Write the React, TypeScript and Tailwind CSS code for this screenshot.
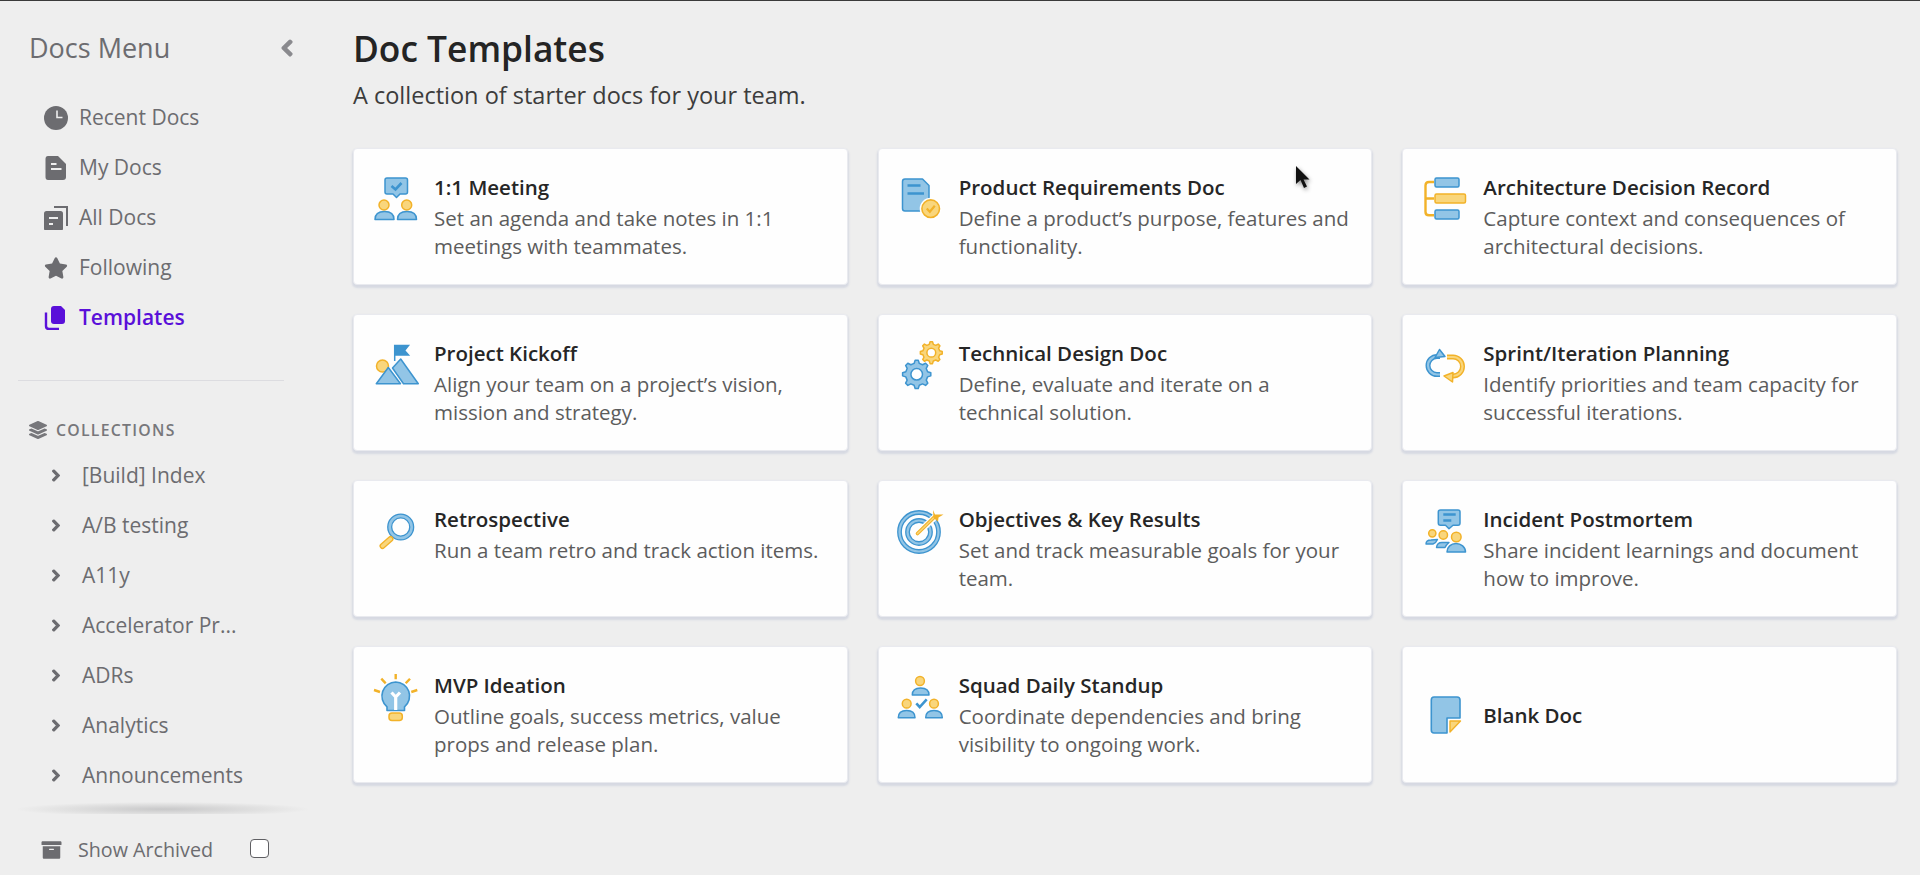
import React from "react";
import { FaChevronLeft, FaChevronRight, FaLayerGroup, FaArchive, FaStar } from "react-icons/fa";

const B = "#3d94cf";
const BL = "#92c5e6";
const Y = "#f2b229";
const YL = "#f9d67c";

function gearPath(cx: number, cy: number, ro: number, ri: number, teeth: number) {
  const pts: string[] = [];
  const step = (Math.PI * 2) / teeth;
  for (let i = 0; i < teeth; i++) {
    const a = i * step - Math.PI / 2;
    const w = step * 0.2;
    const seq: [number, number][] = [
      [a - w * 0.7, ro],
      [a + w * 0.7, ro],
      [a + w * 1.5, ri],
      [a + step - w * 1.5, ri],
    ];
    seq.forEach(([t, r]) => pts.push(`${(cx + r * Math.cos(t)).toFixed(2)} ${(cy + r * Math.sin(t)).toFixed(2)}`));
  }
  return "M" + pts.join("L") + "Z";
}

const Person = ({ hx, hy, r, x1, x2, y1, y2 }: { hx: number; hy: number; r: number; x1: number; x2: number; y1: number; y2: number }) => (
  <>
    <circle cx={hx} cy={hy} r={r} fill={YL} stroke={Y} strokeWidth="1.5" />
    <path d={`M${x1} ${y2}C${x1} ${y1 + 1} ${(x1 + x2) / 2 - 4} ${y1} ${(x1 + x2) / 2} ${y1}C${(x1 + x2) / 2 + 4} ${y1} ${x2} ${y1 + 1} ${x2} ${y2}Z`} fill={BL} stroke={B} strokeWidth="1.5" strokeLinejoin="round" />
  </>
);

const Svg = ({ children }: { children: React.ReactNode }) => (
  <svg viewBox="0 0 48 48" width="48" height="48" className="shrink-0 overflow-visible">{children}</svg>
);

const icons: Record<string, React.ReactNode> = {
  meeting: (
    <Svg>
      <path d="M16 3H34.5Q36.5 3 36.5 5V17Q36.5 19 34.5 19H29L25.5 22.5L22 19H16Q14 19 14 17V5Q14 3 16 3Z" fill={BL} stroke={B} strokeWidth="1.5" strokeLinejoin="round" />
      <path d="M20.5 11L24.5 14.5L30.5 8" fill="none" stroke={B} strokeWidth="2.6" />
      <Person hx={13} hy={30} r={5} x1={4} x2={23} y1={36.5} y2={44.5} />
      <Person hx={35.7} hy={30} r={5} x1={26.5} x2={45.5} y1={36.5} y2={44.5} />
    </Svg>
  ),
  kickoff: (
    <Svg>
      <circle cx="11.5" cy="25" r="6" fill={YL} stroke={Y} strokeWidth="1.5" />
      <path d="M23.7 20V4.5H37.5L33.5 9.5L37.5 14H23.7" fill={B} stroke={B} strokeWidth="1.5" />
      <path d="M17.3 26.5L29.5 42.7H5.3Z" fill={BL} stroke={B} strokeWidth="1.5" strokeLinejoin="round" />
      <path d="M21.5 27L29.7 18L47.3 42.7H32.5Z" fill={BL} stroke={B} strokeWidth="1.5" strokeLinejoin="round" />
    </Svg>
  ),
  prd: (
    <Svg>
      <path d="M9 4H26.5L33 10.5V36H9Q6.5 36 6.5 33.5V6.5Q6.5 4 9 4Z" fill={BL} stroke={B} strokeWidth="1.5" strokeLinejoin="round" />
      <path d="M11.5 10.5H24.5M11.5 18.5H28" stroke={B} strokeWidth="2.4" />
      <circle cx="34.7" cy="33.7" r="11" fill="#fff" />
      <circle cx="34.7" cy="33.7" r="8.8" fill={YL} stroke={Y} strokeWidth="1.6" />
      <path d="M30.8 33.5L33.8 36.8L38.8 30.8" fill="none" stroke={Y} strokeWidth="2.2" />
    </Svg>
  ),
  tech: (
    <Svg>
      <path d={gearPath(35.3, 11.7, 11, 8.6, 8)} fill={YL} stroke={Y} strokeWidth="1.5" strokeLinejoin="round" />
      <circle cx="35.3" cy="11.7" r="4.4" fill="#fff" stroke={Y} strokeWidth="1.5" />
      <path d={gearPath(20.7, 33.3, 14.2, 11.2, 8)} fill={BL} stroke={B} strokeWidth="1.5" strokeLinejoin="round" />
      <circle cx="20.7" cy="33.3" r="5.8" fill="#fff" stroke={B} strokeWidth="1.5" />
    </Svg>
  ),
  adr: (
    <Svg>
      <path d="M14 7H9Q5.5 7 5.5 10.5V37Q5.5 40.3 9 40.3H14M5.5 23.5H14" fill="none" stroke={Y} strokeWidth="2.4" />
      <rect x="15" y="3" width="24" height="9" rx="1.5" fill={BL} stroke={B} strokeWidth="1.5" />
      <rect x="15" y="19" width="30.5" height="9" rx="1.5" fill={YL} stroke={Y} strokeWidth="1.5" />
      <rect x="15" y="35" width="24" height="9" rx="1.5" fill={BL} stroke={B} strokeWidth="1.5" />
    </Svg>
  ),
  sprint: (
    <Svg>
      <path d="M20 15.5H17A9 9 0 0 0 17 33.5H20" fill="none" stroke={B} strokeWidth="5" />
      <path d="M20 15.5H17A9 9 0 0 0 17 33.5H20" fill="none" stroke={BL} strokeWidth="2.2" />
      <path d="M19.5 8.5L25 15.5L15 16.5Z" fill={BL} stroke={B} strokeWidth="1.5" strokeLinejoin="round" />
      <path d="M27 16H33A9.5 9.5 0 0 1 33 35H30" fill="none" stroke={Y} strokeWidth="5" />
      <path d="M27 16H33A9.5 9.5 0 0 1 33 35H30" fill="none" stroke={YL} strokeWidth="2.2" />
      <path d="M24 35L33 31.5L32.5 41Z" fill={YL} stroke={Y} strokeWidth="1.5" strokeLinejoin="round" />
    </Svg>
  ),
  retro: (
    <Svg>
      <circle cx="29.7" cy="20" r="11" fill="none" stroke={B} strokeWidth="5.2" />
      <circle cx="29.7" cy="20" r="11" fill="none" stroke={BL} strokeWidth="2.6" />
      <path d="M11.5 39L19.5 32" stroke={Y} strokeWidth="6" strokeLinecap="round" />
      <path d="M11.5 39L19.5 32" stroke={YL} strokeWidth="3.4" strokeLinecap="round" />
    </Svg>
  ),
  okr: (
    <Svg>
      <circle cx="23" cy="25" r="19.5" fill="none" stroke={B} strokeWidth="4.8" />
      <circle cx="23" cy="25" r="19.5" fill="none" stroke={BL} strokeWidth="2.2" />
      <circle cx="23" cy="25" r="11.5" fill="none" stroke={B} strokeWidth="4.8" />
      <circle cx="23" cy="25" r="11.5" fill="none" stroke={BL} strokeWidth="2.2" />
      <path d="M21.5 26.5L41 8" stroke="#fff" strokeWidth="6.5" />
      <path d="M21.5 26.5L38.5 10" stroke={Y} strokeWidth="3.6" strokeLinecap="round" />
      <path d="M21.5 26.5L38.5 10" stroke={YL} strokeWidth="1.4" strokeLinecap="round" />
      <path d="M37 3L39 7.5L47.5 7.5L42.5 10.5L42 14.5L37.5 11Z" fill={Y} />
    </Svg>
  ),
  incident: (
    <Svg>
      <path d="M20.5 3H38Q40 3 40 5V16Q40 18.3 38 18.3H33L29 21.7L25.5 18.3H20.5Q18.3 18.3 18.3 16V5Q18.3 3 20.5 3Z" fill={BL} stroke={B} strokeWidth="1.5" strokeLinejoin="round" />
      <path d="M23.3 7.5H35.7M23.3 13.5H31.3" stroke={B} strokeWidth="2.4" />
      <circle cx="12.3" cy="26.3" r="3.6" fill={YL} stroke={Y} strokeWidth="1.5" />
      <circle cx="23.3" cy="28" r="4.2" fill={YL} stroke={Y} strokeWidth="1.5" />
      <circle cx="36.3" cy="30" r="4.8" fill={YL} stroke={Y} strokeWidth="1.5" />
      <path d="M6 37Q6 33 11 33L17.5 32.5Q16 36 13 37Z" fill={BL} stroke={B} strokeWidth="1.4" strokeLinejoin="round" />
      <path d="M16.5 40.5Q17 35.5 22 35.5L29 35.5Q26 38 25 40.5Z" fill={BL} stroke={B} strokeWidth="1.4" strokeLinejoin="round" />
      <path d="M27 45C27 40 31 36.5 36 36.5C41 36.5 45.5 40 45.5 45Z" fill={BL} stroke={B} strokeWidth="1.5" strokeLinejoin="round" />
    </Svg>
  ),
  mvp: (
    <Svg>
      <path d="M24.7 1V6.3M10.3 5.7L14.7 10.3M3 17L9 19M39 5.7L34.7 10.3M46.3 17L40.3 19" stroke={Y} strokeWidth="2.4" />
      <path d="M24.7 9A14 14 0 0 1 33.5 33.8V37.5H16V33.8A14 14 0 0 1 24.7 9Z" fill={BL} stroke={B} strokeWidth="1.6" strokeLinejoin="round" />
      <path d="M20.5 19.5L24.7 24L29 19.5M24.7 24V37" fill="none" stroke="#fff" strokeWidth="3.2" />
      <rect x="18" y="40" width="13.3" height="7.5" rx="3" fill={YL} stroke={Y} strokeWidth="1.5" />
    </Svg>
  ),
  squad: (
    <Svg>
      <Person hx={24} hy={8} r={4.4} x1={16.3} x2={33} y1={15} y2={22} />
      <Person hx={10.7} hy={30.7} r={4.4} x1={2.3} x2={19} y1={37.5} y2={44.7} />
      <Person hx={38} hy={30.7} r={4.4} x1={29.7} x2={46.3} y1={37.5} y2={44.7} />
      <path d="M20.3 30.3L23.7 34L30.7 26.3" fill="none" stroke={B} strokeWidth="2.6" />
    </Svg>
  ),
  blank: (
    <Svg>
      <path d="M14 6H37Q40 6 40 9V27H27V42H14Q11.3 42 11.3 39V9Q11.3 6 14 6Z" fill={BL} stroke={B} strokeWidth="1.6" strokeLinejoin="round" />
      <path d="M30 30H40.5L30 41Z" fill={YL} stroke={Y} strokeWidth="1.4" strokeLinejoin="round" />
    </Svg>
  ),
};

const cards = [
  { icon: "meeting", title: "1:1 Meeting", desc: "Set an agenda and take notes in 1:1 meetings with teammates." },
  { icon: "prd", title: "Product Requirements Doc", desc: "Define a product’s purpose, features and functionality." },
  { icon: "adr", title: "Architecture Decision Record", desc: "Capture context and consequences of architectural decisions." },
  { icon: "kickoff", title: "Project Kickoff", desc: "Align your team on a project’s vision, mission and strategy." },
  { icon: "tech", title: "Technical Design Doc", desc: "Define, evaluate and iterate on a technical solution." },
  { icon: "sprint", title: "Sprint/Iteration Planning", desc: "Identify priorities and team capacity for successful iterations." },
  { icon: "retro", title: "Retrospective", desc: "Run a team retro and track action items." },
  { icon: "okr", title: "Objectives & Key Results", desc: "Set and track measurable goals for your team." },
  { icon: "incident", title: "Incident Postmortem", desc: "Share incident learnings and document how to improve." },
  { icon: "mvp", title: "MVP Ideation", desc: "Outline goals, success metrics, value props and release plan." },
  { icon: "squad", title: "Squad Daily Standup", desc: "Coordinate dependencies and bring visibility to ongoing work." },
  { icon: "blank", title: "Blank Doc", desc: "" },
];

const GRAY = "#6c6c70";
const navIcon = "shrink-0 w-[24px] h-[24px]";

const nav = [
  {
    label: "Recent Docs",
    icon: (
      <svg viewBox="0 0 24 24" className={navIcon}>
        <circle cx="12" cy="12" r="12" fill={GRAY} />
        <path d="M13 4.5V11.5H18.5" fill="none" stroke="#eee" strokeWidth="1.6" />
      </svg>
    ),
  },
  {
    label: "My Docs",
    icon: (
      <svg viewBox="0 0 24 24" className={navIcon}>
        <path d="M4 0H14L22 8V21Q22 24 19 24H4Q1.5 24 1.5 21V3Q1.5 0 4 0Z" fill={GRAY} />
        <path d="M7 8H12.5M7 13H17.5" stroke="#eee" strokeWidth="2" />
      </svg>
    ),
  },
  {
    label: "All Docs",
    icon: (
      <svg viewBox="0 0 24 24" className={navIcon}>
        <path d="M10 1H23V20" fill="none" stroke={GRAY} strokeWidth="2" />
        <rect x="0" y="5" width="19" height="20" rx="2.5" fill={GRAY} />
        <path d="M5 12H14M5 18H9" stroke="#eee" strokeWidth="2" />
      </svg>
    ),
  },
  { label: "Following", icon: <FaStar className={navIcon} color={GRAY} /> },
];

export default function App() {
  return (
    <div className="relative flex h-screen w-full overflow-hidden border-t border-[#3a3a3a] bg-[#eeeeee] font-['Open_Sans',sans-serif]">
      <aside className="flex w-[320px] shrink-0 flex-col">
        <div className="flex h-[92px] shrink-0 items-start justify-between pl-[29px] pr-[26px] pt-[29px]">
          <span className="text-[27px] font-medium leading-[36px] text-[#6c6c70]">Docs Menu</span>
          <FaChevronLeft className="mt-[9px] h-[18px] w-[14px] text-[#8a8a8e]" stroke="currentColor" strokeWidth={50} />
        </div>
        <nav className="flex shrink-0 flex-col pl-[44px]">
          {nav.map((n) => (
            <div key={n.label} className="flex h-[50px] items-center gap-[11px] text-[21px] text-[#6c6c70]">
              {n.icon}
              <span>{n.label}</span>
            </div>
          ))}
          <div className="flex h-[50px] items-center gap-[11px] text-[21px] font-semibold text-[#5a10d9]">
            <svg viewBox="0 0 24 24" className={navIcon}>
              <path d="M10 0H17L21 4V15Q21 18 18 18H10Q7 18 7 15V3Q7 0 10 0Z" fill="#5a10d9" />
              <path d="M2 6.5V20Q2 23 5 23H15" fill="none" stroke="#5a10d9" strokeWidth="2.4" />
            </svg>
            <span>Templates</span>
          </div>
        </nav>
        <div className="ml-[18px] mt-[37px] w-[266px] shrink-0 border-t border-[#dcdce0]" />
        <div className="flex shrink-0 items-center gap-[9px] pl-[29px] pt-[39px] text-[15.8px] font-semibold leading-[20px] tracking-[0.08em] text-[#77777b]">
          <FaLayerGroup className="h-[18px] w-[18px]" />
          <span>COLLECTIONS</span>
        </div>
        <div className="mt-[11px] flex min-h-0 flex-1 flex-col overflow-hidden">
          {["[Build] Index", "A/B testing", "A11y", "Accelerator Pr...", "ADRs", "Analytics", "Announcements"].map((c) => (
            <div key={c} className="flex h-[50px] shrink-0 items-center text-[21px] text-[#6c6c70]">
              <FaChevronRight className="mb-[2px] ml-[52px] h-[13px] w-[8px] shrink-0" stroke="currentColor" strokeWidth={50} />
              <span className="ml-[22px]">{c}</span>
            </div>
          ))}
        </div>
        <div className="ml-[18px] h-[12px] w-[290px] shrink-0 bg-[radial-gradient(ellipse_at_50%_60%,#c8c8c9_0%,#e2e2e2_50%,#eeeeee_72%)]" />
        <div className="flex h-[61px] shrink-0 items-center pl-[41px] pt-[10px] text-[19.7px] text-[#6c6c70]">
          <FaArchive className="h-[20px] w-[21px]" />
          <span className="ml-[16px]">Show Archived</span>
          <span className="mb-[2px] ml-[37px] h-[19px] w-[19px] rounded-[4px] border border-[#5f5f63] bg-white" />
        </div>
      </aside>
      <main className="min-w-0 flex-1 pl-[33px] pr-[23px]">
        <h1 className="mt-[26px] text-[35.3px] font-semibold leading-[42px] text-[#242424]">Doc Templates</h1>
        <p className="mt-[10px] text-[23.5px] leading-[32px] text-[#3c3c3c]">A collection of starter docs for your team.</p>
        <div className="mt-[37px] grid grid-cols-3 gap-x-[30px] gap-y-[29px] [grid-auto-rows:137px]">
          {cards.map((c) => {
            const blank = c.icon === "blank";
            return (
              <div key={c.title} className={`flex rounded-[4px] border border-[#e9eaef] bg-[#fefefe] pl-[17px] pr-[14px] shadow-[0_2px_2px_1px_#d6d9e2] ${blank ? "items-center" : "items-start pt-[24px]"}`}>
                <div className={blank ? "" : "mt-[2px]"}>{icons[c.icon]}</div>
                <div className="ml-[15px] min-w-0">
                  <div className="text-[20.5px] font-semibold leading-[28px] text-[#262626]">{c.title}</div>
                  {c.desc && <div className="mt-[3px] text-[20.5px] leading-[28px] text-[#5c5c5c]">{c.desc}</div>}
                </div>
              </div>
            );
          })}
        </div>
      </main>
      <svg viewBox="0 0 16 24" width="16" height="24" className="absolute left-[1295px] top-[165px] drop-shadow-[1px_2px_2px_rgba(0,0,0,0.45)]">
        <path d="M1 0V18L5.5 14L9 22L12 20.5L8.5 13.5H14.5Z" fill="#111" />
      </svg>
    </div>
  );
}
